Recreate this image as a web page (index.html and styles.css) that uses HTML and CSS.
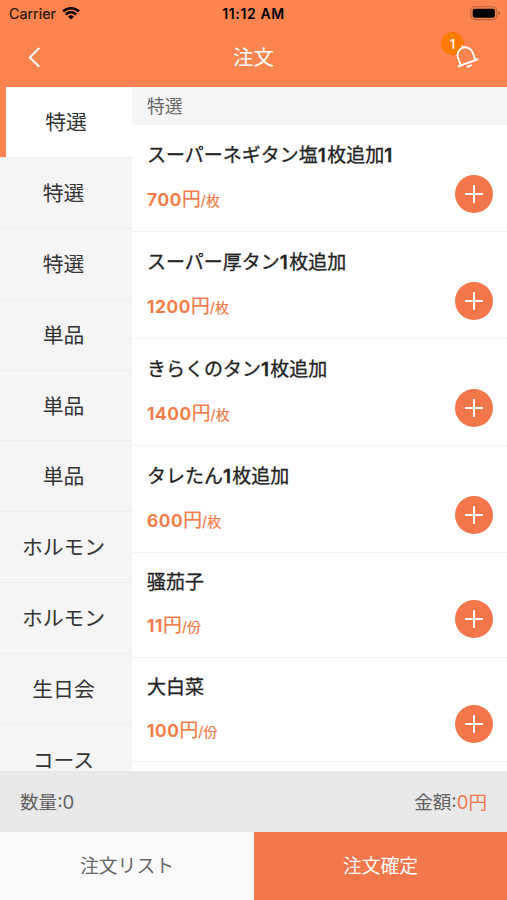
FILE: index.html
```html
<!DOCTYPE html>
<html lang="ja">
<head>
<meta charset="utf-8">
<title>注文</title>
<link rel="stylesheet" href="styles.css">
</head>
<body>
<div class="app">
  <header class="header">
    <div class="status">
      <div class="carrier">Carrier
        <svg class="wifi" width="18" height="14" viewBox="0 0 18 14"><path d="M9 13.6 6.1 10.7a4.1 4.1 0 0 1 5.8 0Z" fill="#000"/><path d="M1.1 5.4a11.2 11.2 0 0 1 15.8 0M3.8 8.5a7.4 7.4 0 0 1 10.4 0" fill="none" stroke="#000" stroke-width="2.5"/></svg>
      </div>
      <div class="time">11:12 AM</div>
      <svg class="battery" width="31" height="15" viewBox="0 0 31 15"><rect x=".8" y=".8" width="26" height="12.8" rx="4" fill="none" stroke="#b8623c" stroke-width="1.1"/><rect x="2.7" y="2.7" width="22.2" height="9" rx="2" fill="#000"/><path d="M28.3 5v4.4c2.2-.6 2.2-3.8 0-4.4Z" fill="#b8623c"/></svg>
    </div>
    <div class="nav">
      <svg class="back" width="14" height="22" viewBox="0 0 14 22"><path d="M12.3 1 2.8 10.4 12.3 19.8" fill="none" stroke="#fff" stroke-width="1.9"/></svg>
      <h1 class="title">注文</h1>
      <div class="bell">
        <span class="badge">1</span>
        <svg class="bell-icon" width="28" height="28" viewBox="0 0 28 28"><g transform="rotate(-20 14 14)" fill="none" stroke="#fff" stroke-width="1.9" stroke-linecap="round"><path d="M6.2 20.2V12a7.8 7.8 0 0 1 15.6 0V20.2M4 20.2H24M14 4.200V2.600M12 23.700H16"/></g></svg>
      </div>
    </div>
  </header>
  <main class="main">
    <nav class="side">
      <div class="cat active">特選</div>
      <div class="cat">特選</div>
      <div class="cat">特選</div>
      <div class="cat">単品</div>
      <div class="cat">単品</div>
      <div class="cat">単品</div>
      <div class="cat">ホルモン</div>
      <div class="cat">ホルモン</div>
      <div class="cat">生日会</div>
      <div class="cat">コース</div>
    </nav>
    <section class="list">
      <h2 class="section">特選</h2>
      <article class="item"><div class="info"><div class="name">スーパーネギタン塩<b>1</b>枚追加<b>1</b></div><div class="price"><b>700</b>円<small>/枚</small></div></div><button class="add" aria-label="追加"></button></article>
      <article class="item"><div class="info"><div class="name">スーパー厚タン<b>1</b>枚追加</div><div class="price"><b>1200</b>円<small>/枚</small></div></div><button class="add" aria-label="追加"></button></article>
      <article class="item"><div class="info"><div class="name">きらくのタン<b>1</b>枚追加</div><div class="price"><b>1400</b>円<small>/枚</small></div></div><button class="add" aria-label="追加"></button></article>
      <article class="item"><div class="info"><div class="name">タレたん<b>1</b>枚追加</div><div class="price"><b>600</b>円<small>/枚</small></div></div><button class="add" aria-label="追加"></button></article>
      <article class="item short"><div class="info"><div class="name" lang="zh-CN">骚茄子</div><div class="price"><b>11</b>円<small>/份</small></div></div><button class="add" aria-label="追加"></button></article>
      <article class="item short"><div class="info"><div class="name" lang="zh-CN">大白菜</div><div class="price"><b>100</b>円<small>/份</small></div></div><button class="add" aria-label="追加"></button></article>
    </section>
  </main>
  <div class="summary"><span>数量:0</span><span>金額:<em>0円</em></span></div>
  <footer class="actions"><button class="act">注文リスト</button><button class="act confirm">注文確定</button></footer>
</div>
</body>
</html>
```
FILE: styles.css
```css
* { box-sizing: border-box; }
body { margin: 0; font-family: Inter, "Noto Sans CJK JP", sans-serif; color: #333; }
button { border: 0; padding: 0; font: inherit; }
.app { width: 507px; height: 900px; display: flex; flex-direction: column; overflow: hidden; background: #fff; }

.header { height: 87px; flex: none; background: #fe844f; }
.status { height: 27px; padding: 0 6px 0 9px; display: grid; grid-template-columns: 1fr auto 1fr; align-items: center; color: #000; font-size: 14.5px; line-height: 27px; }
.carrier { display: flex; align-items: center; gap: 6px; font-size: 14.3px; color: #2a160d; -webkit-text-stroke: .2px #2a160d; }
.wifi { margin-top: -2px; }
.time { margin-right: 3px; font-weight: 600; font-size: 14px; letter-spacing: .6px; }
.battery { justify-self: end; }
.nav { height: 60px; display: grid; grid-template-columns: 1fr auto 1fr; align-items: center; padding: 0 27px; }
.title { margin: 0; font-size: 20.5px; font-weight: 400; color: #fff; line-height: 60px; padding-top: 1px; }
.bell { position: relative; justify-self: end; width: 28px; height: 28px; margin-top: -1px; }
.bell-icon { display: block; position: relative; }
.badge { position: absolute; left: -11px; top: -11px; width: 23px; height: 23px; border-radius: 50%; background: #ff7a00; color: #fff; font-size: 13px; font-weight: 500; line-height: 24px; text-align: center; }

.main { flex: 1; min-height: 0; display: flex; overflow: hidden; }
.side { width: 132px; flex: none; background: #f5f5f5; }
.cat { height: 70.9px; padding-right: 5px; border-bottom: 1px solid #ececec; font-size: 20.8px; line-height: 72.5px; text-align: center; white-space: nowrap; }
.cat.active { background: linear-gradient(90deg, #fe844f 6px, #fff 6px); padding-left: 6px; padding-right: 6px; }
.list { flex: 1; background: #fff; }
.section { margin: 0; height: 37.5px; padding-left: 15px; background: #f5f5f5; color: #666; font-size: 17.8px; font-weight: 400; line-height: 39px; }
.item { height: 107.2px; padding: 0 14px 0 15px; border-bottom: 1px solid #f3f3f3; display: flex; justify-content: space-between; }
.info { padding-top: 16px; }
.name { font-size: 19px; line-height: 30px; color: #222; -webkit-text-stroke: .3px #222; white-space: nowrap; }
.name b { font-weight: 600; letter-spacing: 1.3px; }
.price { margin-top: 14px; font-size: 18.8px; line-height: 30px; color: #f57a45; -webkit-text-stroke: .2px #f57a45; }
.price b { font-size: 17.6px; font-weight: 600; letter-spacing: .6px; }
.price small { font-size: 14px; letter-spacing: .2px; }
.add { margin-top: 50px; width: 38px; height: 38px; flex: none; border-radius: 50%; background: linear-gradient(#fff, #fff) center / 18px 2px no-repeat, linear-gradient(#fff, #fff) center / 2px 18px no-repeat, #f3764a; }
.short { height: 104.3px; }
.short .info { padding-top: 15px; }
.short .price { margin-top: 13px; }
.short .add { margin-top: 47px; }

.summary { height: 61px; flex: none; display: flex; justify-content: space-between; padding: 0 20px; background: #e9e9e9; color: #606060; font-size: 18.6px; line-height: 62px; }
.summary em { font-style: normal; color: #f3764a; }
.actions { height: 68px; flex: none; display: flex; }
.act { width: 254px; padding-top: 2px; background: #fafafa; color: #666; font-size: 18.8px; line-height: 66px; }
.confirm { width: 253px; background: #f3764a; color: #fff; }
```
